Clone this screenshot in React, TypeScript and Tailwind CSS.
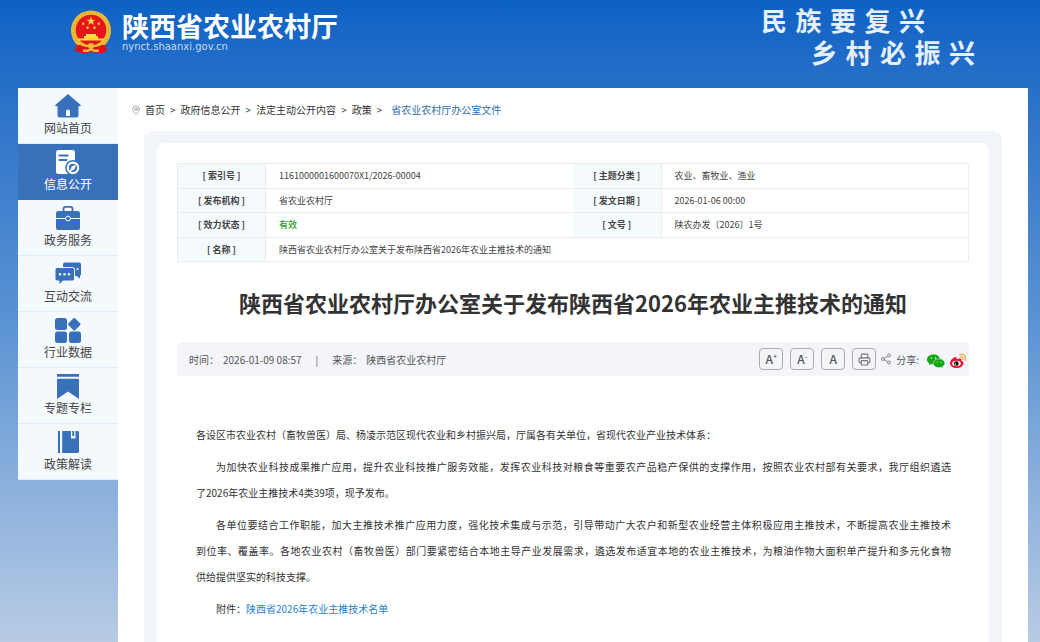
import React from 'react';
import { Printer, MapPin, Share2 } from 'lucide-react';

const NAV_ITEMS = [
  { label: '网站首页', icon: 'home' },
  { label: '信息公开', icon: 'info' },
  { label: '政务服务', icon: 'service' },
  { label: '互动交流', icon: 'chat' },
  { label: '行业数据', icon: 'data' },
  { label: '专题专栏', icon: 'topic' },
  { label: '政策解读', icon: 'policy' },
];

const CRUMBS = ['首页', '政府信息公开', '法定主动公开内容', '政策'];

const NavIcon: React.FC<{ name: string }> = ({ name }) => (
  <svg viewBox="0 0 26 26" className="w-[26px] h-[26px]" fill="currentColor" aria-hidden="true">
    {name === 'home' && (
      <path fillRule="evenodd" d="M13 1 25.400 11.800c.6.7.4 1.400-.4 1.400h-1.500v9.300a2 2 0 0 1-2 2h-17a2 2 0 0 1-2-2v-9.300H1c-.8 0-1-.7-.4-1.400zM11 23h4v-4.500a2 2 0 0 0-4 0z" />
    )}
    {name === 'info' && (
      <>
        <rect x="1" y="1" width="19" height="24" rx="2.5" />
        <path d="M4.500 6.500h8M4.500 11h7" stroke="#3871b9" strokeWidth="2.200" strokeLinecap="round" />
        <circle cx="18" cy="18.800" r="7.800" fill="#3871b9" />
        <circle cx="18" cy="18.800" r="5.200" fill="none" stroke="currentColor" strokeWidth="2.200" />
        <path d="m21.300 15.500-2 4.900-4.600 2 2-4.900z" />
      </>
    )}
    {name === 'service' && (
      <>
        <path d="M8.500 6V3.800c0-1.300.8-2 2-2h5c1.200 0 2 .7 2 2V6" fill="none" stroke="currentColor" strokeWidth="1.800" />
        <rect x="1" y="6" width="24" height="19" rx="2.500" />
        <path d="M1 13.500h24" stroke="#f4f9fe" strokeWidth="1" />
        <circle cx="13" cy="13.500" r="2.400" stroke="#f4f9fe" strokeWidth="1" />
      </>
    )}
    {name === 'chat' && (
      <>
        <path d="M10 1.500h14a2 2 0 0 1 2 2v9.500a2 2 0 0 1-1 1.700v3L22 15H10a2 2 0 0 1-2-2V3.500a2 2 0 0 1 2-2z" />
        <path d="M2 6.500h15.500a2 2 0 0 1 2 2v9.500a2 2 0 0 1-2 2H8l-4 4v-4H2a2 2 0 0 1-2-2V8.500a2 2 0 0 1 2-2z" stroke="#f4f9fe" strokeWidth="1" />
        <g fill="#f4f9fe">
          <circle cx="5" cy="13.200" r="1.200" />
          <circle cx="9.500" cy="13.200" r="1.200" />
          <circle cx="14" cy="13.200" r="1.200" />
          <circle cx="22.500" cy="8" r="1.100" />
        </g>
      </>
    )}
    {name === 'data' && (
      <>
        <rect x="0" y="1" width="12" height="12" rx="2.500" />
        <rect x="0" y="14.500" width="12" height="11.500" rx="2.500" />
        <rect x="14" y="14.500" width="12" height="11.500" rx="2.500" />
        <rect x="14.500" y="2.500" width="9.600" height="9.600" rx="1.500" transform="rotate(45 19.300 7.300)" />
      </>
    )}
    {name === 'topic' && <path d="M2 1h22v2.800H2zM2 5.800h22V26l-11-7.500L2 26z" />}
    {name === 'policy' && (
      <path d="M3 2h2v22H3zM7.200 2H16v7.500h4.500V2h2c.8 0 1.500.7 1.500 1.500v19c0 .8-.7 1.500-1.500 1.500H7.200zM17.300 2h1.900v5h-1.900z" />
    )}
  </svg>
);

const Emblem = () => (
  <svg viewBox="0 0 42 44" className="w-[42px] h-11 shrink-0" role="img" aria-label="国徽">
    <circle cx="21" cy="20.500" r="20" fill="#ecbb35" />
    <circle cx="21" cy="20.500" r="17.800" fill="none" stroke="#d69a22" strokeWidth="0.700" strokeDasharray="2 2" />
    <circle cx="21" cy="20" r="15.300" fill="#e5151c" />
    <path d="m21 6.500 1.100 3.200h3.400l-2.700 2 1 3.300-2.800-2-2.800 2 1-3.300-2.700-2h3.400z" fill="#fbdc3e" />
    <g fill="#fbdc3e">
      <circle cx="13.200" cy="13.700" r="1.200" />
      <circle cx="28.800" cy="13.700" r="1.200" />
      <circle cx="17.500" cy="17.800" r="1.200" />
      <circle cx="24.500" cy="17.800" r="1.200" />
      <path d="M16 24h10v2h2v2.500h6v2H8v-2h6V26h2z" />
    </g>
    <path d="M6 35l6 0 5 2h8l5-2 6 0 1 6-6 2.500-5-1h-8l-5 1L5 41z" fill="#d7131b" />
    <path d="M7 30.500c5 8 23 8 28 0" fill="none" stroke="#ecbb35" strokeWidth="2" />
    <circle cx="21" cy="36" r="3" fill="#ecbb35" />
    <path d="M13 39.500h5l3-2 3 2h5v2.500h-5l-3-1.500-3 1.500h-5z" fill="#ecbb35" />
  </svg>
);

const WechatIcon = () => (
  <svg viewBox="0 0 18 16" className="w-[18px] h-4" aria-hidden="true">
    <path d="M6.500 1.500C2.900 1.500 0 3.600 0 6.400c0 1.700.9 3.100 2.400 4L2 12.300l2.300-1.200c.7.200 1.400.3 2.200.3 3.600 0 6.500-2.200 6.500-5S10.100 1.500 6.500 1.500z" fill="#14a614" />
    <path d="M12 5.800c-3.200 0-5.700 1.900-5.700 4.400s2.500 4.400 5.700 4.400c.7 0 1.300-.1 1.900-.3l2 1-.4-1.800c1.500-.8 2.300-2 2.300-3.300 0-2.500-2.600-4.400-5.800-4.400z" fill="#14a614" stroke="#f4f5fb" strokeWidth="0.500" />
    <g fill="#fff">
      <circle cx="4.300" cy="5" r="0.700" />
      <circle cx="8.600" cy="5" r="0.700" />
      <circle cx="10.200" cy="9" r="0.600" />
      <circle cx="14" cy="9" r="0.600" />
    </g>
  </svg>
);

const WeiboIcon = () => (
  <svg viewBox="0 0 18 16" className="w-[18px] h-4" aria-hidden="true">
    <path d="M7.500 4.500C6.500 2.800 1 6.500 1 10.200 1 13 4 15 7.500 15c4 0 7-2.300 7-4.800 0-1.500-1-2.300-2.200-2.700.5-1.500-.8-2.700-4.500-1.200z" fill="#e6162d" />
    <ellipse cx="7.500" cy="10.500" rx="4.300" ry="2.800" fill="#fff" />
    <circle cx="7.300" cy="10.600" r="2.400" fill="#111" />
    <circle cx="6.500" cy="11" r="0.700" fill="#fff" />
    <path d="M11 1.500c3.800-.8 6.500 2 5.300 5.600M11.500 4c1.800-.3 3 .9 2.500 2.500" fill="none" stroke="#f7b04b" strokeWidth="1.500" strokeLinecap="round" />
  </svg>
);

const Label: React.FC<{ children: React.ReactNode }> = ({ children }) => (
  <th scope="row" className="border-y border-r border-[#ececec] bg-[#f5fafd] text-center font-bold">
    [ {children} ]
  </th>
);

const Value: React.FC<{ children: React.ReactNode; span?: number; className?: string }> = ({ children, span, className = '' }) => (
  <td colSpan={span} className={`border-y border-[#ececec] px-[13px] ${className}`}>
    {children}
  </td>
);

// a full line of a justified paragraph
const Line: React.FC<{ children: React.ReactNode; indent?: boolean }> = ({ children, indent }) => (
  <span className={`block [text-align-last:justify] ${indent ? 'pl-5' : ''}`}>{children}</span>
);

const toolButton = 'w-6 h-[22px] border border-[#aaaab0] rounded-sm flex items-center justify-center text-xs font-medium text-[#555]';

const Header = () => (
  <header className="h-[88px] flex justify-between items-start pl-[70px] pr-[65px]">
    <div className="flex items-start gap-[10px] pt-[10px] text-white">
      <Emblem />
      <div>
        <h1 className="text-[27px] leading-8 font-bold">陕西省农业农村厅</h1>
        <p className="text-[10px] leading-[10px] text-[#c5daf2] font-['DejaVu_Sans']">nynct.shaanxi.gov.cn</p>
      </div>
    </div>
    <div className="w-[214px] pt-1 text-[26px] leading-8 font-bold text-[#e6effa]">
      <p className="w-[164px] [text-align-last:justify]">民族要复兴</p>
      <p className="w-[164px] ml-auto [text-align-last:justify]">乡村必振兴</p>
    </div>
  </header>
);

const SideNav = () => (
  <nav className="w-[100px] shrink-0 self-start bg-[#f4f9fe]">
    {NAV_ITEMS.map((item) => (
      <a
        key={item.label}
        href="#"
        className={`h-14 flex flex-col items-center pt-[5px] border-b text-xs leading-[18px] ${
          item.icon === 'info' ? 'bg-[#3871b9] border-[#3871b9] text-white' : 'border-[#dcecfb] text-[#3871b9]'
        }`}
      >
        <NavIcon name={item.icon} />
        <span className={item.icon === 'info' ? 'text-white' : 'text-[#444]'}>{item.label}</span>
      </a>
    ))}
  </nav>
);

const Breadcrumb = () => (
  <div className="flex items-center pt-[13px] pl-[13px] text-[10px] leading-[18px] text-[#333]">
    <MapPin size={10} className="text-[#999] mr-1" />
    {CRUMBS.map((c) => (
      <React.Fragment key={c}>
        <a href="#">{c}</a>
        <span className="px-[5px]">&gt;</span>
      </React.Fragment>
    ))}
    <a href="#" className="pl-1 text-[#2b6cab]">省农业农村厅办公室文件</a>
  </div>
);

const App: React.FC = () => {
  return (
    <div className="min-h-screen flex flex-col bg-linear-to-b from-[#0b62c4] via-[#5a93d3] to-[#b8cbe4] font-['Noto_Sans_CJK_SC',sans-serif]">
      <Header />
      <div className="flex grow ml-[18px] mr-3">
        <SideNav />
        <main className="grow min-w-0 bg-white flex flex-col">
          <Breadcrumb />
          <div className="grow flex flex-col mt-3 mx-[26px] bg-[#f1f5f9] rounded-t-lg px-[13px] pt-3">
            <article className="grow bg-white rounded-t-lg px-5 pt-5">
              <table className="w-full table-fixed border-collapse border border-[#ececec] text-[9px] leading-3 text-[#444]">
                <colgroup>
                  <col className="w-[88px]" />
                  <col />
                  <col className="w-[88px]" />
                  <col />
                </colgroup>
                <tbody>
                  <tr className="h-[25px]">
                    <Label>索引号</Label>
                    <Value>1161000001600070X1/2026-00004</Value>
                    <Label>主题分类</Label>
                    <Value>农业、畜牧业、渔业</Value>
                  </tr>
                  <tr className="h-6">
                    <Label>发布机构</Label>
                    <Value>省农业农村厅</Value>
                    <Label>发文日期</Label>
                    <Value>2026-01-06 00:00</Value>
                  </tr>
                  <tr className="h-[25px]">
                    <Label>效力状态</Label>
                    <Value className="text-[#1f9a2e] font-medium">有效</Value>
                    <Label>文号</Label>
                    <Value>陕农办发〔2026〕1号</Value>
                  </tr>
                  <tr className="h-6">
                    <Label>名称</Label>
                    <Value span={3}>陕西省农业农村厅办公室关于发布陕西省2026年农业主推技术的通知</Value>
                  </tr>
                </tbody>
              </table>

              <h2 className="mt-6 text-center text-[22px] leading-8 font-bold text-[#333]">
                陕西省农业农村厅办公室关于发布陕西省2026年农业主推技术的通知
              </h2>

              <div className="mt-6 h-[34px] flex items-center justify-between rounded-sm bg-[#f4f5fb] pl-3 pr-[2px] text-[10px] text-[#555]">
                <div className="flex items-center">
                  <span>时间：</span>
                  <span className="ml-1">2026-01-09 08:57</span>
                  <span className="mx-[14px]">|</span>
                  <span>来源：</span>
                  <span className="ml-1">陕西省农业农村厅</span>
                </div>
                <div className="flex items-center">
                  <div className="flex items-center gap-[7px]">
                    <button className={toolButton} aria-label="放大字体">A<sup className="text-[7px]">+</sup></button>
                    <button className={toolButton} aria-label="缩小字体">A<sup className="text-[7px]">-</sup></button>
                    <button className={toolButton} aria-label="默认字体">A</button>
                    <button className={toolButton} aria-label="打印"><Printer size={13} className="text-[#777]" /></button>
                  </div>
                  <Share2 size={12} className="mx-1 text-[#888]" />
                  <span>分享:</span>
                  <a href="#" aria-label="微信" className="ml-2 pt-1"><WechatIcon /></a>
                  <a href="#" aria-label="微博" className="ml-1 pt-1"><WeiboIcon /></a>
                </div>
              </div>

              <div className="mt-[46px] pl-[19px] pr-[18px] text-[10px] leading-[26px] text-[#333] flex flex-col gap-[6px]">
                <p>各设区市农业农村（畜牧兽医）局、杨凌示范区现代农业和乡村振兴局，厅属各有关单位，省现代农业产业技术体系：</p>
                <p>
                  <Line indent>为加快农业科技成果推广应用，提升农业科技推广服务效能，发挥农业科技对粮食等重要农产品稳产保供的支撑作用，按照农业农村部有关要求，我厅组织遴选</Line>
                  了2026年农业主推技术4类39项，现予发布。
                </p>
                <p>
                  <Line indent>各单位要结合工作职能，加大主推技术推广应用力度，强化技术集成与示范，引导带动广大农户和新型农业经营主体积极应用主推技术，不断提高农业主推技术</Line>
                  <Line>到位率、覆盖率。各地农业农村（畜牧兽医）部门要紧密结合本地主导产业发展需求，遴选发布适宜本地的农业主推技术，为粮油作物大面积单产提升和多元化食物</Line>
                  供给提供坚实的科技支撑。
                </p>
                <p className="pl-5">
                  附件：<a href="#" className="text-[#1f7fd0]">陕西省2026年农业主推技术名单</a>
                </p>
              </div>
            </article>
          </div>
        </main>
      </div>
    </div>
  );
};

export default App;
